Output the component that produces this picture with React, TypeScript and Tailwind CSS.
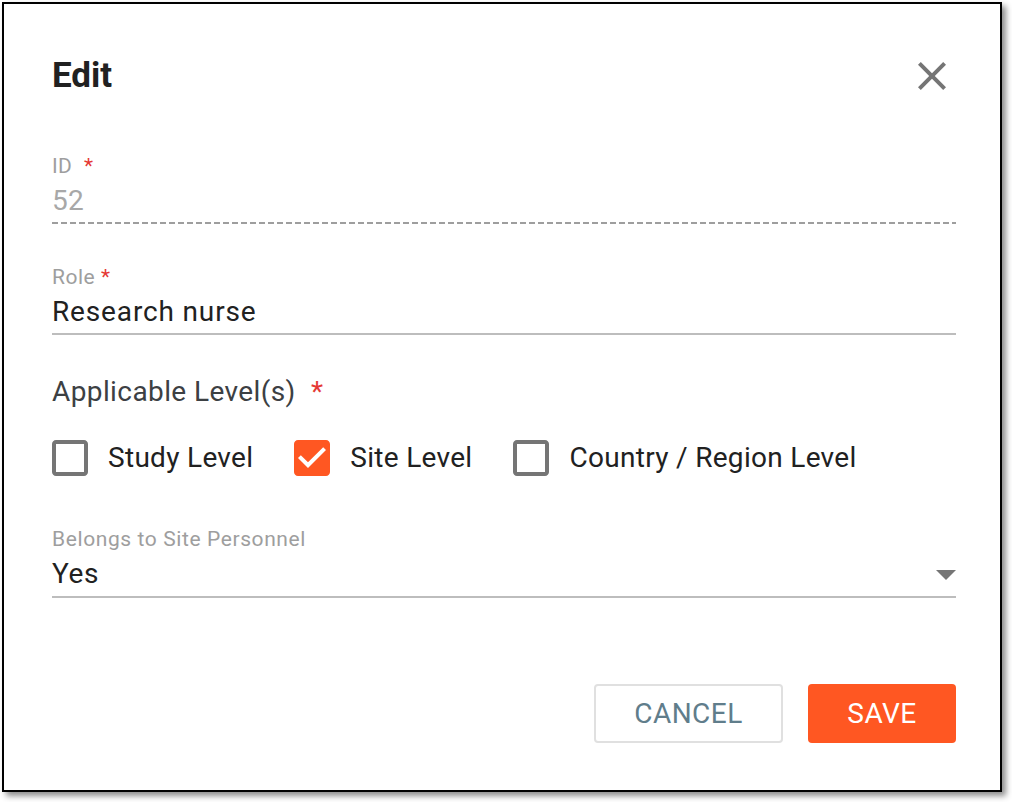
import React from "react";

function CheckIcon({ checked }: { checked: boolean }) {
  return checked ? (
    <svg width="36" height="36" viewBox="3 3 18 18" className="shrink-0">
      <path
        fill="#ff5722"
        d="M19 3H5c-1.11 0-2 .9-2 2v14c0 1.1.89 2 2 2h14c1.11 0 2-.9 2-2V5c0-1.1-.89-2-2-2zm-9 14l-5-5 1.41-1.41L10 14.17l7.59-7.59L19 8l-9 9z"
      />
    </svg>
  ) : (
    <svg width="36" height="36" viewBox="3 3 18 18" className="shrink-0">
      <path
        fill="#757575"
        d="M19 5v14H5V5h14m0-2H5c-1.1 0-2 .9-2 2v14c0 1.1.9 2 2 2h14c1.1 0 2-.9 2-2V5c0-1.1-.9-2-2-2z"
      />
    </svg>
  );
}

function Option({ label, checked }: { label: string; checked: boolean }) {
  return (
    <div className="flex items-center h-[36px]">
      <CheckIcon checked={checked} />
      <span className="ml-[20px] text-[28px] leading-[32px] tracking-[0.3px] text-[#212121]">{label}</span>
    </div>
  );
}

export default function App() {
  return (
    <div className="w-[1012px] h-[802px] bg-white font-[Roboto,sans-serif] pt-[2px] pl-[2px]">
      <div className="w-[1000px] h-[790px] border-2 border-black bg-white shadow-[4px_4px_6px_rgba(0,0,0,0.45)] pl-[48px] pr-[44px] pt-[48px] flex flex-col">
        <div className="flex items-center justify-between h-[48px]">
          <h2 className="text-[35px] leading-[48px] font-bold text-[#212121]">Edit</h2>
          <svg width="48" height="48" viewBox="0 0 24 24">
            <path
              fill="#757575"
              d="M19 6.41L17.59 5 12 10.59 6.41 5 5 6.41 10.59 12 5 17.59 6.41 19 12 13.41 17.59 19 19 17.59 13.41 12z"
            />
          </svg>
        </div>

        <div className="mt-[54px] text-[21px] leading-[24px] tracking-[0.4px] text-[#9e9e9e]">
          ID <span className="ml-[6px] text-[#e53935]">*</span>
        </div>
        <div className="mt-[7px] text-[28px] leading-[32px] tracking-[0.3px] text-[#a8a8a8]">52</div>
        <div className="mt-[5px] h-[2px] bg-[linear-gradient(to_right,#9e9e9e_0_6px,transparent_6px_9px)] bg-[length:9px_2px]" />

        <div className="mt-[41px] text-[21px] leading-[24px] tracking-[0.5px] text-[#9e9e9e]">
          Role <span className="text-[#e53935]">*</span>
        </div>
        <div className="mt-[7px] text-[28px] leading-[32px] tracking-[0.85px] text-[#212121]">Research nurse</div>
        <div className="mt-[5px] h-[2px] bg-[#bdbdbd]" />

        <div className="mt-[41px] text-[28px] leading-[32px] tracking-[0.4px] text-[#3c4043]">
          Applicable Level(s) <span className="ml-[8px] text-[#e53935]">*</span>
        </div>
        <div className="mt-[32px] flex items-center gap-[41px]">
          <Option label="Study Level" checked={false} />
          <Option label="Site Level" checked={true} />
          <Option label="Country / Region Level" checked={false} />
        </div>

        <div className="mt-[51px] text-[21px] leading-[24px] tracking-[0.6px] text-[#9e9e9e]">Belongs to Site Personnel</div>
        <div className="mt-[8px] flex items-center justify-between">
          <span className="text-[28px] leading-[32px] tracking-[0.6px] text-[#212121] -translate-y-[1px]">Yes</span>
          <svg width="20" height="10" viewBox="7 10 10 5">
            <path fill="#757575" d="M7 10l5 5 5-5z" />
          </svg>
        </div>
        <div className="mt-[5px] h-[2px] bg-[#bdbdbd]" />

        <div className="mt-[86px] flex justify-end gap-[25px]">
          <button className="w-[189px] h-[59px] rounded-[4px] border-2 border-[#e0e0e0] bg-white text-[28px] text-[#607d8b] tracking-[0.5px]">
            CANCEL
          </button>
          <button className="w-[148px] h-[59px] rounded-[4px] bg-[#ff5722] text-[28px] text-white tracking-[0.5px]">
            SAVE
          </button>
        </div>
      </div>
    </div>
  );
}
